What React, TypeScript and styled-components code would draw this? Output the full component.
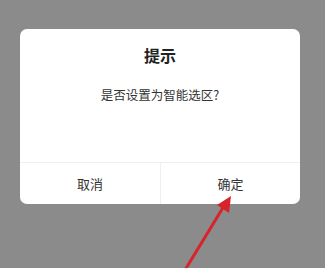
import React from "react";
import styled, { createGlobalStyle } from "styled-components";

const Global = createGlobalStyle`
  html, body { margin: 0; padding: 0; }
  body {
    background: #8b8b8b;
    font-family: "Noto Sans CJK SC", "Noto Sans", sans-serif;
    width: 325px;
    height: 268px;
    overflow: hidden;
  }
`;

const Screen = styled.div`
  position: relative;
  width: 325px;
  height: 268px;
  padding: 29px 25px 0 20px;
  box-sizing: border-box;
`;

const Dialog = styled.div`
  width: 280px;
  height: 175px;
  background: #ffffff;
  border-radius: 7px;
  display: flex;
  flex-direction: column;
  overflow: hidden;
`;

const Body = styled.div`
  height: 134px;
  display: flex;
  flex-direction: column;
  align-items: center;
  border-bottom: 1px solid #efefef;
  box-sizing: border-box;
`;

const Title = styled.div`
  margin-top: 14px;
  font-size: 16px;
  font-weight: 700;
  line-height: 24px;
  color: #222;
`;

const Message = styled.div`
  margin-top: 19px;
  font-size: 12.5px;
  line-height: 18px;
  color: #333;
`;

const Actions = styled.div`
  flex: 1;
  display: grid;
  grid-template-columns: 1fr 1fr;
`;

const Action = styled.div<{ $divider?: boolean }>`
  display: flex;
  align-items: center;
  justify-content: center;
  font-size: 13px;
  color: #333;
  border-left: ${(p) => (p.$divider ? "1px solid #efefef" : "none")};
`;

const Arrow = styled.svg`
  position: absolute;
  left: 0;
  top: 0;
`;

export default function App() {
  return (
    <>
      <Global />
      <Screen>
        <Dialog>
          <Body>
            <Title>提示</Title>
            <Message>是否设置为智能选区?</Message>
          </Body>
          <Actions>
            <Action>取消</Action>
            <Action $divider>确定</Action>
          </Actions>
        </Dialog>
        <Arrow width="325" height="268" viewBox="0 0 325 268">
          <line x1="185" y1="270" x2="224" y2="206" stroke="#d8232c" strokeWidth="3" strokeLinecap="round" />
          <polygon points="231,196 217,205 229,213" fill="#d8232c" />
        </Arrow>
      </Screen>
    </>
  );
}
